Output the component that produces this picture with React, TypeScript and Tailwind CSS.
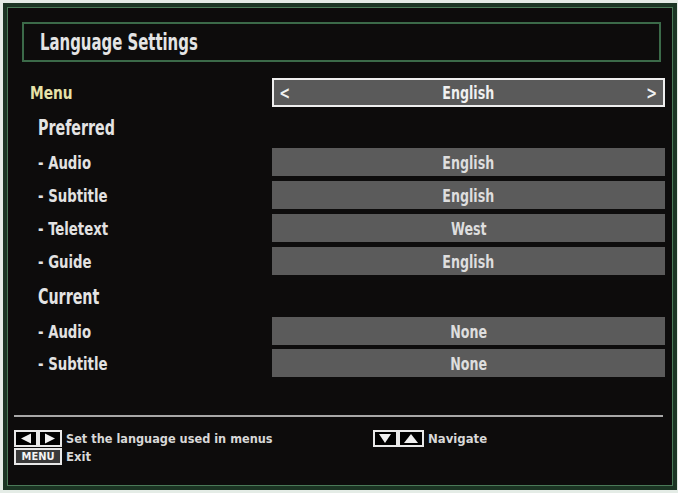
import React from "react";

const FONT = "font-['DejaVu_Sans_Condensed','DejaVu_Sans',sans-serif] [font-stretch:condensed]";

function LR() {
  return (
    <svg width="48" height="17" viewBox="0 0 48 17">
      <rect x="1" y="1" width="22" height="15" fill="#000" stroke="#e8e8e8" strokeWidth="2" />
      <rect x="25" y="1" width="22" height="15" fill="#000" stroke="#e8e8e8" strokeWidth="2" />
      <polygon points="7,8.5 17,3.5 17,13.5" fill="#f0f0f0" />
      <polygon points="41,8.5 31,3.5 31,13.5" fill="#f0f0f0" />
    </svg>
  );
}

function UD() {
  return (
    <svg width="51" height="17" viewBox="0 0 51 17">
      <rect x="1" y="1" width="23" height="15" fill="#000" stroke="#e8e8e8" strokeWidth="2" />
      <rect x="26" y="1" width="24" height="15" fill="#000" stroke="#e8e8e8" strokeWidth="2" />
      <polygon points="6,4 18,4 12,13" fill="#f0f0f0" />
      <polygon points="31,13 45,13 38,4" fill="#f0f0f0" />
    </svg>
  );
}

function Row({ label, value }: { label: string; value: string }) {
  return (
    <div className="flex h-[28px] items-center">
      <div className="w-[250px] pl-[16px] text-[18px] font-bold text-[#e2e2e2]">
        <span className="inline-block origin-left [transform:scaleX(0.82)]">{label}</span>
      </div>
      <div className="flex h-full flex-1 items-center justify-center bg-[#5b5b5b] text-[18px] font-bold text-[#dedede]">
        <span className="inline-block [transform:scaleX(0.78)]">{value}</span>
      </div>
    </div>
  );
}

export default function App() {
  return (
    <div className={`h-[493px] w-[678px] bg-[#e4ece6] pl-[3px] pt-[3px] ${FONT}`}>
      <div className="h-[487px] w-[674px] border-[4px] border-[#1b3524] bg-[#0d0c0c] shadow-[inset_0_0_0_1px_#4a7a58]">
        <div className="pl-[15px] pr-[8px] pt-[15px]">
          <div className="mr-[4px] flex h-[40px] items-center border-2 border-[#3b6a49] pl-[16px] text-[23px] font-bold text-[#e4e4e4]">
            <span className="inline-block origin-left [transform:scaleX(0.72)]">Language Settings</span>
          </div>

          <div className="mt-[16px] flex h-[29px] items-center">
            <div className="w-[250px] pl-[8px] text-[18px] font-bold text-[#e6e2a8]">
              <span className="inline-block origin-left [transform:scaleX(0.85)]">Menu</span>
            </div>
            <div className="flex h-full flex-1 items-center justify-between border-2 border-[#eeeeee] bg-[#5a5a5a] px-[4px] text-[18px] font-bold text-[#f0f0f0]">
              <span className="inline-block [transform:scaleX(0.8)]">&lt;</span>
              <span className="inline-block [transform:scaleX(0.78)]">English</span>
              <span className="inline-block [transform:scaleX(0.8)]">&gt;</span>
            </div>
          </div>

          <div className="flex h-[41px] items-center pl-[16px] text-[22px] font-bold text-[#e4e4e4]">
            <span className="inline-block origin-left [transform:scaleX(0.72)]">Preferred</span>
          </div>
          <div className="flex flex-col gap-[5px]">
            <Row label="- Audio" value="English" />
            <Row label="- Subtitle" value="English" />
            <Row label="- Teletext" value="West" />
            <Row label="- Guide" value="English" />
          </div>
          <div className="flex h-[42px] items-center pl-[16px] text-[22px] font-bold text-[#e4e4e4]">
            <span className="inline-block origin-left [transform:scaleX(0.72)]">Current</span>
          </div>
          <div className="flex flex-col gap-[4px]">
            <Row label="- Audio" value="None" />
            <Row label="- Subtitle" value="None" />
          </div>
        </div>

        <div className="ml-[7px] mr-[10px] mt-[38px] h-[2px] bg-[#a8a8a8]" />

        <div className="flex pl-[7px] pt-[13px] text-[13px] font-bold leading-[17px] text-[#d8d8d8]">
          <div className="flex w-[359px] flex-col gap-[1px]">
            <div className="flex items-center gap-[4px]">
              <LR />
              <span className="inline-block origin-left [transform:scaleX(0.97)]">Set the language used in menus</span>
            </div>
            <div className="flex items-center gap-[4px]">
              <div className="flex h-[17px] w-[48px] items-center justify-center border-2 border-[#e8e8e8] bg-[#3a3a3a] text-[11px] leading-none text-[#f4f4f4]">
                MENU
              </div>
              <span>Exit</span>
            </div>
          </div>
          <div className="flex h-[17px] items-center gap-[4px]">
            <UD />
            <span>Navigate</span>
          </div>
        </div>
      </div>
    </div>
  );
}
